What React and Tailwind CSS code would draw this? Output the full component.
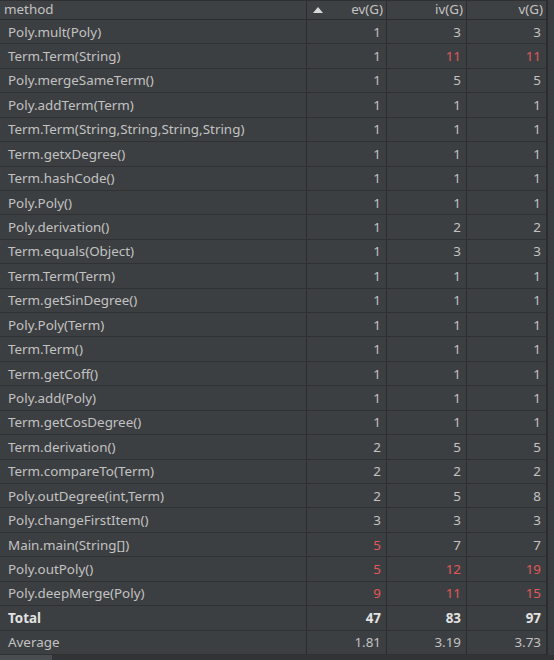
import React from 'react';

// method metrics table (ev / iv / v), red = flagged value
const rows = [
  ['Poly.mult(Poly)', 1, 3, 3],
  ['Term.Term(String)', 1, 11, 11, [false, true, true]],
  ['Poly.mergeSameTerm()', 1, 5, 5],
  ['Poly.addTerm(Term)', 1, 1, 1],
  ['Term.Term(String,String,String,String)', 1, 1, 1],
  ['Term.getxDegree()', 1, 1, 1],
  ['Term.hashCode()', 1, 1, 1],
  ['Poly.Poly()', 1, 1, 1],
  ['Poly.derivation()', 1, 2, 2],
  ['Term.equals(Object)', 1, 3, 3],
  ['Term.Term(Term)', 1, 1, 1],
  ['Term.getSinDegree()', 1, 1, 1],
  ['Poly.Poly(Term)', 1, 1, 1],
  ['Term.Term()', 1, 1, 1],
  ['Term.getCoff()', 1, 1, 1],
  ['Poly.add(Poly)', 1, 1, 1],
  ['Term.getCosDegree()', 1, 1, 1],
  ['Term.derivation()', 2, 5, 5],
  ['Term.compareTo(Term)', 2, 2, 2],
  ['Poly.outDegree(int,Term)', 2, 5, 8],
  ['Poly.changeFirstItem()', 3, 3, 3],
  ['Main.main(String[])', 5, 7, 7, [true, false, false]],
  ['Poly.outPoly()', 5, 12, 19, [true, true, true]],
  ['Poly.deepMerge(Poly)', 9, 11, 15, [true, true, true]],
];

const Row = ({ name, vals, red = [], bold }) => (
  <div className={`grid grid-cols-[307px_80px_80px_80px] h-[24.45px] border-b border-[#2f3133] ${bold ? 'font-bold text-[#e2e2e2]' : 'text-[#c2c2c2]'}`}>
    <div className="pl-2 flex items-center border-r border-[#2a2c2d] truncate">{name}</div>
    {vals.map((v, i) => (
      <div key={i} className={`pr-[5px] flex items-center justify-end border-r border-[#2a2c2d] ${red[i] ? 'text-[#e0585b]' : ''}`}>
        {v}
      </div>
    ))}
  </div>
);

export default function App() {
  return (
    <div className="w-[554px] h-[660px] bg-[#3c3f41] flex flex-col overflow-hidden text-[13.4px]" style={{ fontFamily: '"Noto Sans", "Open Sans", sans-serif' }}>
      <div className="flex flex-1 min-h-0">
        <div className="w-[547px] flex flex-col">
          {/* header */}
          <div className="grid grid-cols-[307px_80px_80px_80px] h-[20px] border-t border-[#2e3032] border-b border-b-[#2a2c2d] bg-[#3e4143] text-[#c2c2c2]">
            <div className="pl-1 flex items-center border-r border-[#2a2c2d] leading-none">method</div>
            <div className="pr-[3px] flex items-center justify-between border-r border-[#2a2c2d] leading-none">
              <svg width="10" height="6" viewBox="0 0 10 6" className="ml-[6px]">
                <path d="M5 0 L10 6 L0 6 Z" fill="#d8d8d8" />
              </svg>
              <span>ev(G)</span>
            </div>
            <div className="pr-[3px] flex items-center justify-end border-r border-[#2a2c2d] leading-none">iv(G)</div>
            <div className="pr-[3px] flex items-center justify-end border-r border-[#2a2c2d] leading-none">v(G)</div>
          </div>
          {rows.map(([name, a, b, c, red]) => (
            <Row key={name} name={name} vals={[a, b, c]} red={red} />
          ))}
          <Row name="Total" vals={[47, 83, 97]} bold />
          <Row name="Average" vals={['1.81', '3.19', '3.73']} />
        </div>
        <div className="flex-1 bg-[#3a3d3f] border-l border-[#2a2c2d]" />
      </div>
      {/* horizontal scroll strip */}
      <div className="h-[5px] bg-[#313335] flex">
        <div className="w-[52px] bg-[#4a4d4f]" />
      </div>
    </div>
  );
}
